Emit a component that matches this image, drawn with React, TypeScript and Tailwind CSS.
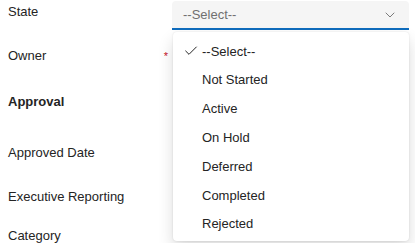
import React from 'react';
import { Check, ChevronDown } from 'lucide-react';

const options = ['--Select--', 'Not Started', 'Active', 'On Hold', 'Deferred', 'Completed', 'Rejected'];

const App: React.FC = () => {
  const selected = '--Select--';

  return (
    <div className="relative w-[415px] h-[243px] overflow-hidden bg-white text-[13px] text-[#242424] font-['Liberation_Sans',Arial,sans-serif]">
      {/* State */}
      <div className="flex items-start pt-[1px]">
        <div className="w-[172px] pl-2 mt-[1px] leading-5">State</div>
        <div className="flex items-center justify-between w-[237px] h-[29px] rounded-t-[4px] bg-[#f5f5f5] border-b-2 border-[#0f6cbd] pl-[11px] pr-[11px]">
          <span className="text-[#707070]">--Select--</span>
          <ChevronDown size={16} strokeWidth={1.25} className="text-[#616161]" />
        </div>
      </div>

      {/* Owner */}
      <div className="flex items-center mt-[16px] leading-5">
        <div className="w-[172px] pl-2 flex justify-between pr-[4px]">
          <span>Owner</span>
          <span className="text-[#c50f1f] text-[11px]">*</span>
        </div>
      </div>

      {/* Approval */}
      <div className="mt-[26px] pl-2 leading-5 font-semibold">Approval</div>

      <div className="mt-[31px] pl-2 leading-5">Approved Date</div>

      <div className="mt-[24px] pl-2 leading-5">Executive Reporting</div>

      <div className="flex items-start mt-[19px] leading-5">
        <div className="w-[172px] pl-2">Category</div>
        <div className="flex justify-end w-[237px] pr-[10px] pt-[12px]">
          <ChevronDown size={16} strokeWidth={1.5} className="text-[#424242]" />
        </div>
      </div>

      {/* open listbox */}
      <div className="absolute left-[173px] top-[32px] w-[236px] h-[209px] rounded-[4px] bg-white pt-[5px] shadow-[0_0_2px_rgba(0,0,0,0.12),0_8px_16px_rgba(0,0,0,0.14)]">
        {options.map((opt) => (
          <div key={opt} className="flex items-center h-[28.8px] pl-[10px]">
            <span className="w-[19px] flex items-center">
              {opt === selected && <Check size={16} strokeWidth={1.5} className="text-[#242424]" />}
            </span>
            <span>{opt}</span>
          </div>
        ))}
      </div>
    </div>
  );
};

export default App;
